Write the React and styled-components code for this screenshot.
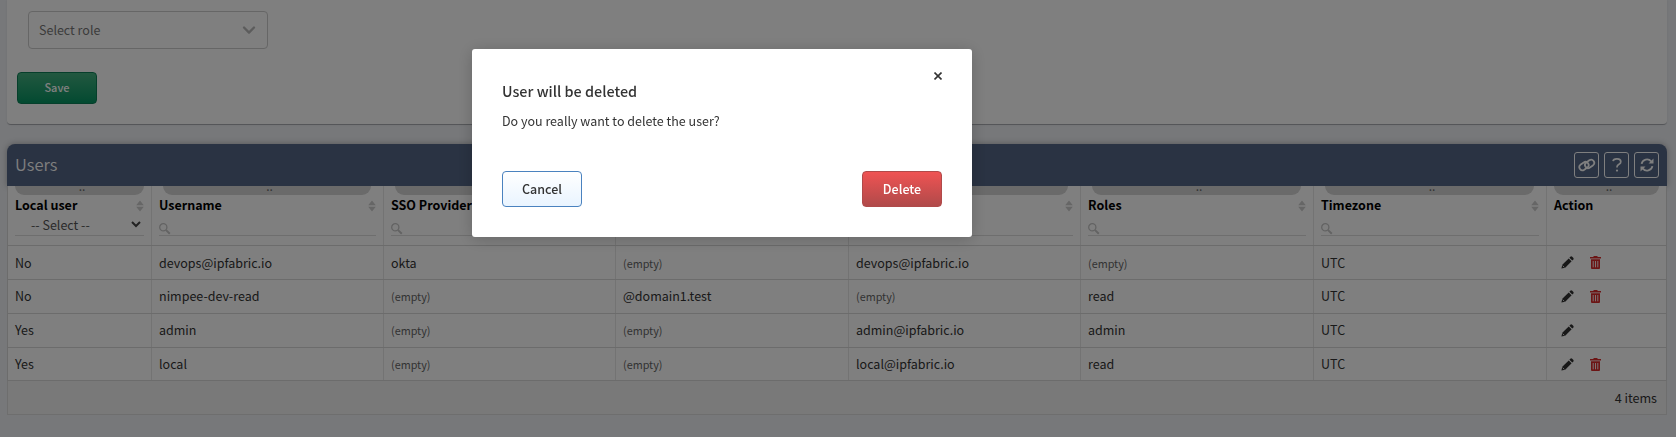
import React from "react";
import styled, { createGlobalStyle, css } from "styled-components";

const GlobalStyle = createGlobalStyle`
  * { box-sizing: border-box; }
  html, body { margin: 0; height: 100%; overflow: hidden; }
  body {
    background: #eef0f4;
    color: #333;
    font-family: "Noto Sans CJK SC", "Open Sans", sans-serif;
    font-size: 12.5px;
    line-height: 18px;
  }
  button { font: inherit; }
`;

const Page = styled.main`
  height: 437px;
  padding: 0 9px 0 7px;
  display: flex;
  flex-direction: column;
  overflow: hidden;
`;

const FormCard = styled.section`
  height: 125px;
  flex: none;
  padding: 11px 10px 0;
  background: #fff;
  border-bottom: 1px solid #aaadb2;
  border-radius: 0 0 4px 4px;
  box-shadow: 0 0 2px rgba(0, 0, 0, 0.08);
`;

const RoleSelect = styled.div`
  display: flex;
  align-items: center;
  justify-content: space-between;
  width: 240px;
  height: 38px;
  margin: 0 0 23px 11px;
  padding: 0 11px 0 10px;
  border: 1px solid #ccc;
  border-radius: 4px;
  color: #777;
`;

const SaveButton = styled.button`
  width: 80px;
  height: 32px;
  padding: 0 0 2px;
  border: 1px solid #0d7f57;
  border-radius: 4px;
  background: linear-gradient(#45b080, #069462);
  color: #fff;
  font-size: 11px;
  font-weight: 500;
`;

const TableCard = styled.section`
  margin-top: 19px;
  border-radius: 8px 8px 0 0;
`;

const TableTitle = styled.header`
  display: flex;
  align-items: center;
  height: 42px;
  padding: 0 8px;
  gap: 5px;
  border-radius: 8px 8px 0 0;
  background: #546686;
  color: #fff;
  box-shadow: 0 0 6px rgba(0, 0, 0, 0.3);
`;

const Title = styled.h2`
  flex: 1;
  margin: 0;
  padding-bottom: 3px;
  font-size: 16.5px;
  font-weight: 350;
`;

const IconButton = styled.button`
  display: grid;
  place-items: center;
  width: 25px;
  height: 26px;
  padding: 0;
  border: 1px solid #fff;
  border-radius: 3px;
  background: none;
  color: #fff;
`;

const Row = styled.div`
  display: grid;
  grid-template-columns: 143px 232px 232px 233px 232px 233px 233px 1fr;
  height: ${(p) => p.$height}px;
  border: solid #d8d8d8;
  border-width: 0 1px 1px;
  background: #fff;
`;

const HeadCell = styled.div`
  display: flex;
  flex-direction: column;
  padding: 0 7px;
  & + & { border-left: 1px solid #e6e6e6; }
`;

const Handle = styled.div`
  height: 9px;
  margin: 0 ${(p) => (p.$wide ? "5px 0 4px" : "0")};
  padding-left: 5px;
  border-radius: 0 0 9px 9px;
  background: #d4d4d4;
  color: #666;
  font-size: 12px;
  line-height: 0;
  text-align: center;
`;

const HeadLabel = styled.div`
  display: flex;
  align-items: center;
  justify-content: space-between;
  height: 21px;
  color: #000;
  font-weight: 700;
`;

const Label = styled.span`
  padding-bottom: 2px;
`;

const Filter = styled.div`
  display: flex;
  align-items: center;
  height: 20px;
  padding-top: 6px;
  border-bottom: 1px solid #ddd;
  color: #bbb;
`;

const SelectFilter = styled(Filter)`
  justify-content: space-between;
  padding: 0 3px 2px 16px;
  color: #555;
`;

const Cell = styled.div`
  display: flex;
  align-items: center;
  padding: 0 7px ${(p) => (p.$raised ? 2 : 0)}px;
  ${(p) => p.$empty && css`font-size: 10.8px; color: #666;`}
  & + & { border-left: 1px solid #e6e6e6; }
`;

const Actions = styled(Cell)`
  gap: 16px;
  padding-left: 14px;
`;

const Footer = styled.footer`
  display: flex;
  align-items: center;
  justify-content: flex-end;
  height: 34px;
  padding: 1px 9px 0 0;
  border: solid #ddd;
  border-width: 0 1px 1px;
  background: #f2f2f2;
  font-size: 12.6px;
`;

const Overlay = styled.div`
  position: fixed;
  inset: 0;
  display: flex;
  justify-content: center;
  align-items: flex-start;
  padding: 49px 232px 0 0;
  background: rgba(0, 0, 0, 0.5);
`;

const Dialog = styled.div`
  display: flex;
  flex-direction: column;
  width: 500px;
  height: 188px;
  padding: 20px 30px 30px;
  border-radius: 3px;
  background: #fff;
  box-shadow: 0 2px 16px rgba(0, 0, 0, 0.2);
`;

const CloseButton = styled.button`
  align-self: flex-end;
  display: grid;
  width: 8px;
  height: 14px;
  place-items: center;
  padding: 0;
  border: 0;
  background: none;
`;

const DialogTitle = styled.h3`
  margin: -1px 0 0;
  font-size: 14.4px;
  font-weight: 500;
`;

const DialogText = styled.p`
  margin: 12px 0 0;
`;

const DialogButtons = styled.div`
  display: flex;
  justify-content: space-between;
  margin-top: auto;
`;

const DialogButton = styled.button`
  width: 80px;
  height: 36px;
  padding: 0;
  border: 1px solid ${(p) => (p.$danger ? "#b04a4a" : "#4a82bf")};
  border-radius: 4px;
  background: ${(p) => (p.$danger ? "linear-gradient(#ef5353, #b04a4a)" : "linear-gradient(#fff, #e9f4ff)")};
  color: ${(p) => (p.$danger ? "#fff" : "#333")};
  font-weight: 500;
`;

const Chevron = () => (
  <svg width="14" height="9" viewBox="0 0 14 9" fill="none" stroke="#b8b8b8" strokeWidth="2.3">
    <path d="M2 1.5 7 6.600 12 1.500" strokeLinecap="round" strokeLinejoin="round" />
  </svg>
);

const SmallChevron = () => (
  <svg width="10" height="7" viewBox="0 0 10 7" fill="none" stroke="#444" strokeWidth="2">
    <path d="m1 1 4 4 4-4" />
  </svg>
);

const LinkIcon = () => (
  <svg width="18" height="14" viewBox="0 0 18 14" fill="none" stroke="currentColor" strokeWidth="1.8">
    <rect x="-4.9" y="-3.1" width="9.8" height="6.2" rx="3.1" transform="translate(6 8.1) rotate(-35)" />
    <rect x="-4.9" y="-3.1" width="9.8" height="6.2" rx="3.1" transform="translate(11.6 5.9) rotate(-35)" />
  </svg>
);

const QuestionIcon = () => (
  <svg width="10" height="14" viewBox="0 0 10 14" fill="none" stroke="currentColor" strokeWidth="1.7">
    <path d="M1 3.2Q1.4.9 4.6.9h.6q3.6 0 3.6 2.8 0 1.6-1.8 2.6Q5 7.4 5 9v.6" />
    <circle cx="5" cy="12.6" r="1.1" fill="currentColor" stroke="none" />
  </svg>
);

const RefreshIcon = () => (
  <svg width="14" height="14" viewBox="0 0 14 14" fill="none" stroke="currentColor" strokeWidth="1.8">
    <path d="M1.600 5.800A5.500 5.500 0 0 1 11.200 3.300M12.400 8.200A5.500 5.500 0 0 1 2.800 10.700" />
    <path d="M13.500.6v5h-5zM.5 13.400v-5h5z" fill="currentColor" stroke="none" />
  </svg>
);

const SortIcon = () => (
  <svg width="8" height="12" viewBox="0 0 8 12" fill="#ccc">
    <path d="M4 .5 7.800 5.200H.2zM4 11.500.2 6.800h7.600z" />
  </svg>
);

const SearchIcon = () => (
  <svg width="12" height="12" viewBox="0 0 12 12" fill="none" stroke="#c6c6c6">
    <circle cx="4.300" cy="4.300" r="3.600" strokeWidth="1.300" />
    <path d="m7.100 7.100 3.700 3.700" strokeWidth="2" />
  </svg>
);

const PencilIcon = () => (
  <svg width="13" height="13" viewBox="0 0 13 13" fill="#303030">
    <path d="M.4 12.600 1.300 8.800 7.700 2.400 10.600 5.300 4.200 11.700z" />
    <path d="m8.400 1.700.9-.9q.9-.9 1.900 0l1 1q.9.9 0 1.900l-.9.900z" />
    <path d="m1.700 9.700 1.600 1.600" stroke="#fff" strokeWidth=".8" />
  </svg>
);

const TrashIcon = () => (
  <svg width="11" height="13" viewBox="0 0 11 13">
    <path d="M0 1h3l1-1h3l1 1h3v1.400H0z" fill="#d92b2b" />
    <path d="M1 3.200h9V12q0 1-1 1H2q-1 0-1-1z" fill="#d92b2b" />
    <path d="M3.200 5v6.300M5.500 5v6.300M7.800 5v6.300" stroke="#fff" strokeWidth=".9" />
  </svg>
);

const CloseIcon = () => (
  <svg width="8" height="8" viewBox="0 0 8 8" stroke="#333" strokeWidth="1.600">
    <path d="m.5.5 7 7M7.500.5l-7 7" />
  </svg>
);

const columns = ["Local user", "Username", "SSO Provider", "Domain suffixes", "Email", "Roles", "Timezone", "Action"];

const users = [
  ["No", "devops@ipfabric.io", "okta", "", "devops@ipfabric.io", "", "UTC"],
  ["No", "nimpee-dev-read", "", "@domain1.test", "", "read", "UTC"],
  ["Yes", "admin", "", "", "admin@ipfabric.io", "admin", "UTC"],
  ["Yes", "local", "", "", "local@ipfabric.io", "read", "UTC"],
];

export default function App() {
  return (
    <>
      <GlobalStyle />
      <Page>
        <FormCard>
          <RoleSelect>Select role<Chevron /></RoleSelect>
          <SaveButton>Save</SaveButton>
        </FormCard>
        <TableCard>
          <TableTitle>
            <Title>Users</Title>
            <IconButton><LinkIcon /></IconButton>
            <IconButton><QuestionIcon /></IconButton>
            <IconButton><RefreshIcon /></IconButton>
          </TableTitle>
          <Row $height={60}>
            {columns.map((name, i) => (
              <HeadCell key={name}>
                <Handle $wide={i > 0 && i < 7}>..</Handle>
                <HeadLabel><Label>{name}</Label>{i < 7 && <SortIcon />}</HeadLabel>
                {i === 0 && <SelectFilter>-- Select --<SmallChevron /></SelectFilter>}
                {i > 0 && i < 7 && <Filter><SearchIcon /></Filter>}
              </HeadCell>
            ))}
          </Row>
          {users.map((user, r) => (
            <Row key={user[1]} $height={r === 3 ? 33 : 34}>
              {user.map((value, i) => (
                <Cell key={i} $empty={!value} $raised={r === 1 || r === 2}>{value || "(empty)"}</Cell>
              ))}
              <Actions>
                <PencilIcon />
                {user[1] !== "admin" && <TrashIcon />}
              </Actions>
            </Row>
          ))}
          <Footer>4 items</Footer>
        </TableCard>
      </Page>
      <Overlay>
        <Dialog>
          <CloseButton><CloseIcon /></CloseButton>
          <DialogTitle>User will be deleted</DialogTitle>
          <DialogText>Do you really want to delete the user?</DialogText>
          <DialogButtons>
            <DialogButton>Cancel</DialogButton>
            <DialogButton $danger>Delete</DialogButton>
          </DialogButtons>
        </Dialog>
      </Overlay>
    </>
  );
}
